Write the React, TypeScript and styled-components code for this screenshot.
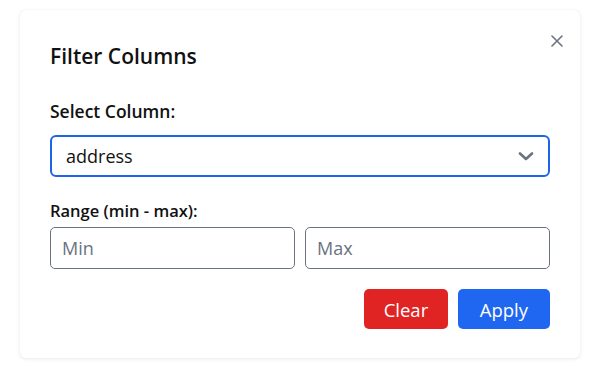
import React, { useState } from "react";
import styled, { createGlobalStyle } from "styled-components";

const GlobalStyle = createGlobalStyle`
  * {
    box-sizing: border-box;
  }
  body {
    margin: 0;
    background: #ffffff;
    font-family: "Open Sans", "Noto Sans", sans-serif;
  }
`;

const Page = styled.div`
  padding: 10px 18px 20px 20px;
`;

const Card = styled.div`
  position: relative;
  width: 560px;
  padding: 32px 30px 29px;
  background: #fff;
  border-radius: 6px;
  box-shadow: 0 1px 4px rgba(0, 0, 0, 0.09), 0 0 1px rgba(0, 0, 0, 0.06);
`;

const CloseButton = styled.button`
  position: absolute;
  top: 22px;
  right: 14px;
  width: 18px;
  height: 18px;
  padding: 0;
  border: none;
  background: none;
  color: #6b7280;
  display: flex;
  align-items: center;
  justify-content: center;
  cursor: pointer;
`;

const Title = styled.h2`
  margin: 0;
  font-size: 21px;
  line-height: 28px;
  font-weight: 600;
  color: #111;
`;

const Label = styled.label<{ $small?: boolean }>`
  display: block;
  margin-top: ${(p) => (p.$small ? "22px" : "28px")};
  margin-bottom: ${(p) => (p.$small ? "4px" : "11px")};
  font-size: ${(p) => (p.$small ? "16.5px" : "17.5px")};
  line-height: ${(p) => (p.$small ? "24px" : "26px")};
  font-weight: 600;
  color: #111;
`;

const SelectWrap = styled.div`
  position: relative;
`;

const Select = styled.select`
  appearance: none;
  width: 100%;
  height: 42px;
  padding: 0 40px 0 14px;
  border: 2px solid #1f63e8;
  border-radius: 6px;
  background: #fff;
  font-family: inherit;
  font-size: 18px;
  color: #111;
  outline: none;
`;

const Chevron = styled.svg`
  position: absolute;
  right: 16px;
  top: 17px;
  pointer-events: none;
`;

const RangeRow = styled.div`
  display: flex;
  gap: 10px;
`;

const Input = styled.input`
  flex: 1;
  min-width: 0;
  height: 42px;
  padding: 0 11px;
  border: 1px solid #6b7280;
  border-radius: 5px;
  font-family: inherit;
  font-size: 18px;
  color: #111;
  outline: none;

  &::placeholder {
    color: #6b7280;
  }
`;

const Actions = styled.div`
  display: flex;
  justify-content: flex-end;
  gap: 10px;
  margin-top: 20px;
`;

const Button = styled.button<{ $variant: "danger" | "primary" }>`
  height: 40px;
  padding: 0 ${(p) => (p.$variant === "danger" ? "19.5px" : "22px")};
  border: none;
  border-radius: 5px;
  background: ${(p) => (p.$variant === "danger" ? "#e02424" : "#1f66f0")};
  color: #fff;
  font-family: inherit;
  font-size: 18.5px;
  cursor: pointer;
`;

const columns = ["address", "name", "age", "city"];

export default function App() {
  const [column, setColumn] = useState("address");
  const [min, setMin] = useState("");
  const [max, setMax] = useState("");

  return (
    <Page>
      <GlobalStyle />
      <Card>
        <CloseButton aria-label="Close">
          <svg width="12" height="12" viewBox="0 0 12 12">
            <path
              d="M1 1 L11 11 M11 1 L1 11"
              stroke="currentColor"
              strokeWidth="1.6"
              strokeLinecap="round"
            />
          </svg>
        </CloseButton>
        <Title>Filter Columns</Title>
        <Label htmlFor="col">Select Column:</Label>
        <SelectWrap>
          <Select
            id="col"
            value={column}
            onChange={(e) => setColumn(e.target.value)}
          >
            {columns.map((c) => (
              <option key={c} value={c}>
                {c}
              </option>
            ))}
          </Select>
          <Chevron width="16" height="9" viewBox="0 0 16 9">
            <path
              d="M2 1.5 L8 7 L14 1.5"
              fill="none"
              stroke="#6b7280"
              strokeWidth="2.6"
              strokeLinecap="round"
              strokeLinejoin="round"
            />
          </Chevron>
        </SelectWrap>
        <Label $small>Range (min - max):</Label>
        <RangeRow>
          <Input
            placeholder="Min"
            value={min}
            onChange={(e) => setMin(e.target.value)}
          />
          <Input
            placeholder="Max"
            value={max}
            onChange={(e) => setMax(e.target.value)}
          />
        </RangeRow>
        <Actions>
          <Button $variant="danger">Clear</Button>
          <Button $variant="primary">Apply</Button>
        </Actions>
      </Card>
    </Page>
  );
}
